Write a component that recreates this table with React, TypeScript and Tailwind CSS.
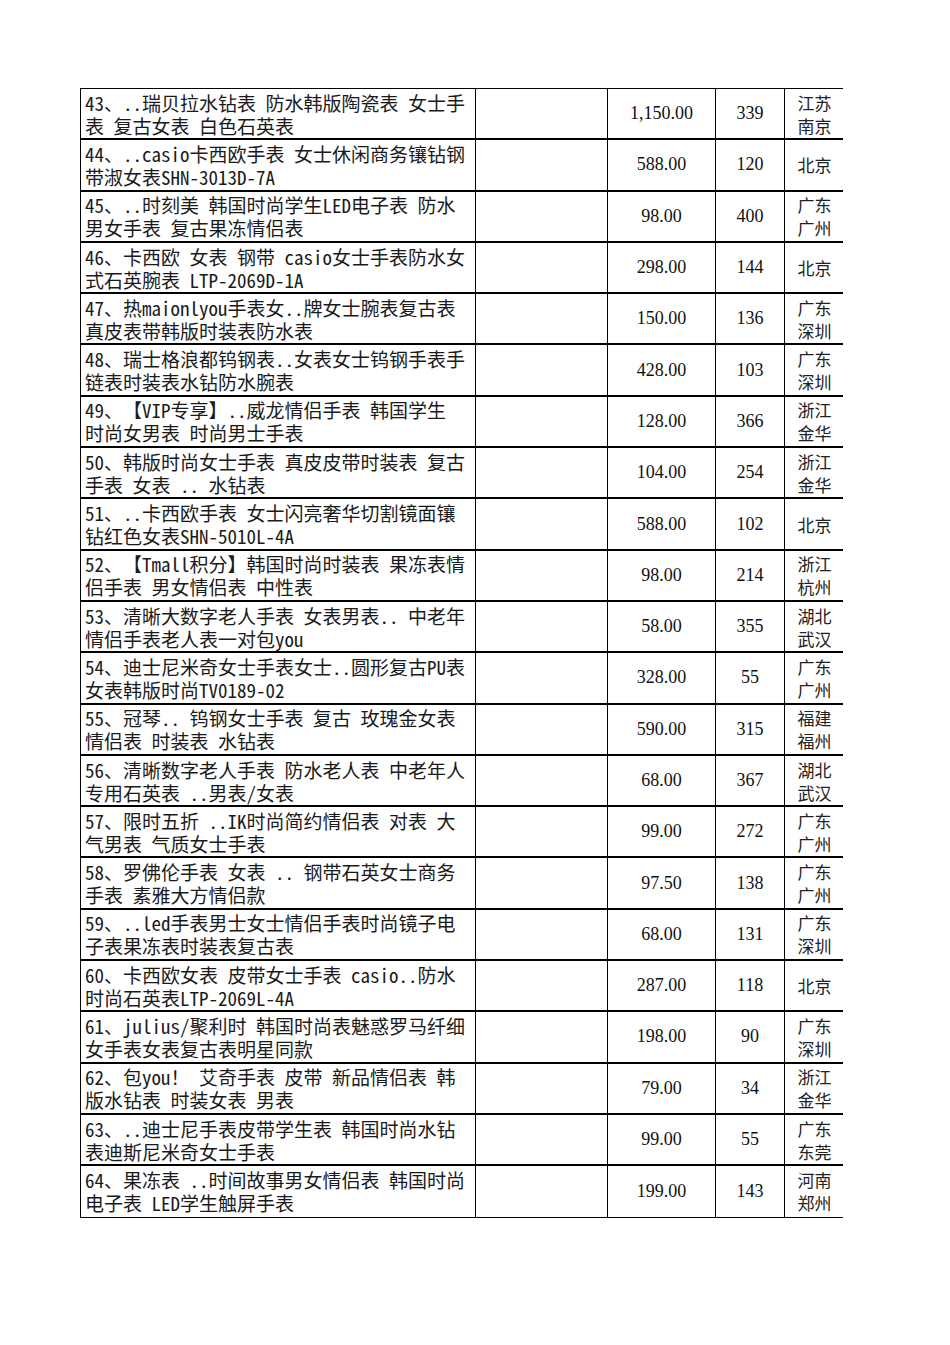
import React from 'react';

type Row = {
  lines: [string, string];
  price: string;
  count: string;
  city: string[];
};

const rows: Row[] = [
  { lines: ['43、..瑞贝拉水钻表 防水韩版陶瓷表 女士手', '表 复古女表 白色石英表'], price: '1,150.00', count: '339', city: ['江苏', '南京'] },
  { lines: ['44、..casio卡西欧手表 女士休闲商务镶钻钢', '带淑女表SHN-3013D-7A'], price: '588.00', count: '120', city: ['北京'] },
  { lines: ['45、..时刻美 韩国时尚学生LED电子表 防水', '男女手表 复古果冻情侣表'], price: '98.00', count: '400', city: ['广东', '广州'] },
  { lines: ['46、卡西欧 女表 钢带 casio女士手表防水女', '式石英腕表 LTP-2069D-1A'], price: '298.00', count: '144', city: ['北京'] },
  { lines: ['47、热maionlyou手表女..牌女士腕表复古表', '真皮表带韩版时装表防水表'], price: '150.00', count: '136', city: ['广东', '深圳'] },
  { lines: ['48、瑞士格浪都钨钢表..女表女士钨钢手表手', '链表时装表水钻防水腕表'], price: '428.00', count: '103', city: ['广东', '深圳'] },
  { lines: ['49、【VIP专享】..威龙情侣手表 韩国学生', '时尚女男表 时尚男士手表'], price: '128.00', count: '366', city: ['浙江', '金华'] },
  { lines: ['50、韩版时尚女士手表 真皮皮带时装表 复古', '手表 女表 .. 水钻表'], price: '104.00', count: '254', city: ['浙江', '金华'] },
  { lines: ['51、..卡西欧手表 女士闪亮奢华切割镜面镶', '钻红色女表SHN-5010L-4A'], price: '588.00', count: '102', city: ['北京'] },
  { lines: ['52、【Tmall积分】韩国时尚时装表 果冻表情', '侣手表 男女情侣表 中性表'], price: '98.00', count: '214', city: ['浙江', '杭州'] },
  { lines: ['53、清晰大数字老人手表 女表男表.. 中老年', '情侣手表老人表一对包you'], price: '58.00', count: '355', city: ['湖北', '武汉'] },
  { lines: ['54、迪士尼米奇女士手表女士..圆形复古PU表', '女表韩版时尚TV0189-02'], price: '328.00', count: '55', city: ['广东', '广州'] },
  { lines: ['55、冠琴.. 钨钢女士手表 复古 玫瑰金女表', '情侣表 时装表 水钻表'], price: '590.00', count: '315', city: ['福建', '福州'] },
  { lines: ['56、清晰数字老人手表 防水老人表 中老年人', '专用石英表 ..男表/女表'], price: '68.00', count: '367', city: ['湖北', '武汉'] },
  { lines: ['57、限时五折 ..IK时尚简约情侣表 对表 大', '气男表 气质女士手表'], price: '99.00', count: '272', city: ['广东', '广州'] },
  { lines: ['58、罗佛伦手表 女表 .. 钢带石英女士商务', '手表 素雅大方情侣款'], price: '97.50', count: '138', city: ['广东', '广州'] },
  { lines: ['59、..led手表男士女士情侣手表时尚镜子电', '子表果冻表时装表复古表'], price: '68.00', count: '131', city: ['广东', '深圳'] },
  { lines: ['60、卡西欧女表 皮带女士手表 casio..防水', '时尚石英表LTP-2069L-4A'], price: '287.00', count: '118', city: ['北京'] },
  { lines: ['61、julius/聚利时 韩国时尚表魅惑罗马纤细', '女手表女表复古表明星同款'], price: '198.00', count: '90', city: ['广东', '深圳'] },
  { lines: ['62、包you！ 艾奇手表 皮带 新品情侣表 韩', '版水钻表 时装女表 男表'], price: '79.00', count: '34', city: ['浙江', '金华'] },
  { lines: ['63、..迪士尼手表皮带学生表 韩国时尚水钻', '表迪斯尼米奇女士手表'], price: '99.00', count: '55', city: ['广东', '东莞'] },
  { lines: ['64、果冻表 ..时间故事男女情侣表 韩国时尚', '电子表 LED学生触屏手表'], price: '199.00', count: '143', city: ['河南', '郑州'] },
];

const cjk = "font-['Noto_Sans_CJK_SC',sans-serif]";

export default function App() {
  return (
    <div className="min-h-[1345px] w-[950px] bg-white pt-[88px] pl-[80px]">
      <div className="w-[763px] border-t border-l border-black">
        {rows.map((r, i) => (
          <div
            key={i}
            className={`flex h-[51.3px] ${i === rows.length - 1 ? 'border-b border-black' : 'border-b-2 border-black'}`}
          >
            <div
              className={`w-[395px] shrink-0 border-r border-black pl-[4px] flex flex-col justify-center text-[19px] leading-[23px] text-[#1a1a1a] whitespace-nowrap ${cjk} [font-feature-settings:'hwid']`}
            >
              <div>{r.lines[0]}</div>
              <div>{r.lines[1]}</div>
            </div>
            <div className="w-[132px] shrink-0 border-r border-black" />
            <div className="w-[108px] shrink-0 border-r border-black flex items-center justify-center font-['Liberation_Serif',serif] text-[18px] text-[#111]">
              {r.price}
            </div>
            <div className="w-[69px] shrink-0 border-r border-black flex items-center justify-center font-['Liberation_Serif',serif] text-[18px] text-[#111]">
              {r.count}
            </div>
            <div className={`w-[59px] shrink-0 flex flex-col items-center justify-center text-[17px] leading-[23px] text-[#222] ${cjk}`}>
              {r.city.map((c) => (
                <div key={c}>{c}</div>
              ))}
            </div>
          </div>
        ))}
      </div>
    </div>
  );
}
